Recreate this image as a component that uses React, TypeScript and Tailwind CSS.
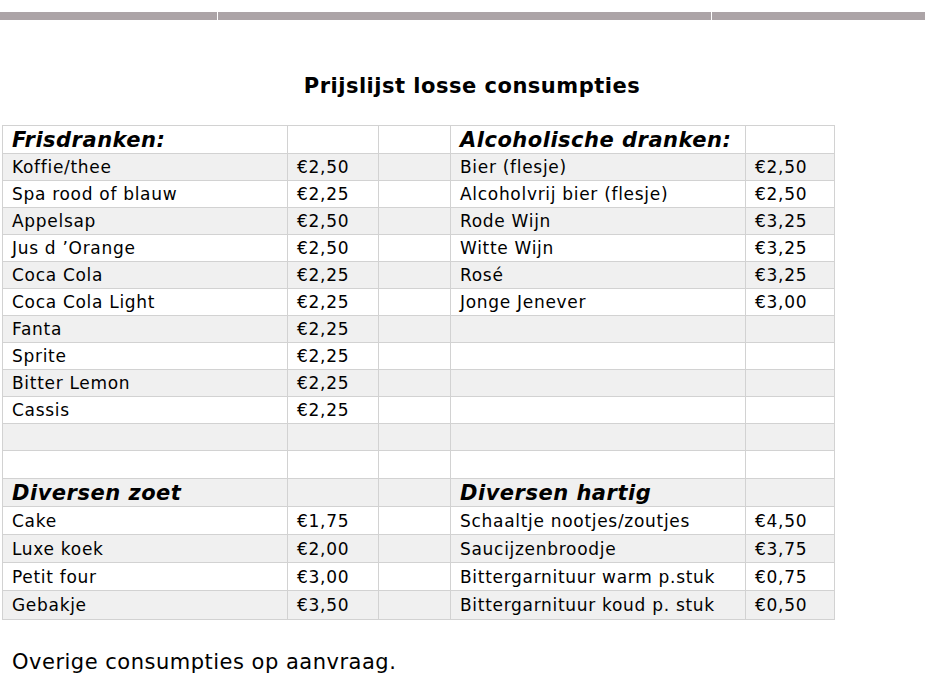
const LEFT_TOP: [string, string][] = [
  ['Koffie/thee', '€2,50'],
  ['Spa rood of blauw', '€2,25'],
  ['Appelsap', '€2,50'],
  ['Jus d ’Orange', '€2,50'],
  ['Coca Cola', '€2,25'],
  ['Coca Cola Light', '€2,25'],
  ['Fanta', '€2,25'],
  ['Sprite', '€2,25'],
  ['Bitter Lemon', '€2,25'],
  ['Cassis', '€2,25'],
  ['', ''],
  ['', ''],
]

const RIGHT_TOP: [string, string][] = [
  ['Bier (flesje)', '€2,50'],
  ['Alcoholvrij bier (flesje)', '€2,50'],
  ['Rode Wijn', '€3,25'],
  ['Witte Wijn', '€3,25'],
  ['Rosé', '€3,25'],
  ['Jonge Jenever', '€3,00'],
  ['', ''],
  ['', ''],
  ['', ''],
  ['', ''],
  ['', ''],
  ['', ''],
]

const LEFT_BOTTOM: [string, string][] = [
  ['Cake', '€1,75'],
  ['Luxe koek', '€2,00'],
  ['Petit four', '€3,00'],
  ['Gebakje', '€3,50'],
]

const RIGHT_BOTTOM: [string, string][] = [
  ['Schaaltje nootjes/zoutjes', '€4,50'],
  ['Saucijzenbroodje', '€3,75'],
  ['Bittergarnituur warm p.stuk', '€0,75'],
  ['Bittergarnituur koud p. stuk', '€0,50'],
]

const td = 'border border-[#d2d2d2] px-[9px] py-0 align-middle whitespace-nowrap leading-5 overflow-hidden'

function Row({ cells, shaded, h, head }: { cells: string[]; shaded: boolean; h: string; head?: boolean }) {
  return (
    <tr className={`${h} ${shaded ? 'bg-[#f0f0f0]' : 'bg-white'}`}>
      {cells.map((c, i) => (
        <td
          key={i}
          className={`${td} ${
            head && (i === 0 || i === 3)
              ? 'text-[21px] font-bold italic tracking-[0.5px]'
              : 'text-[17px] tracking-[0.7px]'
          }`}
        >
          {c}
        </td>
      ))}
    </tr>
  )
}

export default function App() {
  const topRows = LEFT_TOP.map((l, i) => [l[0], l[1], '', RIGHT_TOP[i][0], RIGHT_TOP[i][1]])
  const bottomRows = LEFT_BOTTOM.map((l, i) => [l[0], l[1], '', RIGHT_BOTTOM[i][0], RIGHT_BOTTOM[i][1]])

  return (
    <div className="w-[932px] h-[694px] bg-white text-black font-['DejaVu_Sans',Verdana,sans-serif] pt-3">
      <div className="flex h-2 w-[925px] gap-px">
        <div className="w-[217px] bg-[#aca4a7]" />
        <div className="w-[493px] bg-[#aca4a7]" />
        <div className="flex-1 bg-[#aca4a7]" />
      </div>

      <h1 className="mt-[54px] text-center text-[21px] leading-6 font-bold tracking-[0.5px] pl-[12px]">
        Prijslijst losse consumpties
      </h1>

      <table className="mt-[27px] ml-[2px] border-collapse table-fixed w-[832px]">
        <colgroup>
          <col className="w-[285px]" />
          <col className="w-[91px]" />
          <col className="w-[72px]" />
          <col className="w-[295px]" />
          <col className="w-[89px]" />
        </colgroup>
        <tbody>
          <Row cells={['Frisdranken:', '', '', 'Alcoholische dranken:', '']} shaded={false} h="h-[28px]" head />
          {topRows.map((r, i) => (
            <Row key={i} cells={r} shaded={i % 2 === 0} h={i === 11 ? 'h-[28px]' : 'h-[27px]'} />
          ))}
          <Row cells={['Diversen zoet', '', '', 'Diversen hartig', '']} shaded h="h-[28px]" head />
          {bottomRows.map((r, i) => (
            <Row key={i} cells={r} shaded={i % 2 === 1} h={i === 3 ? 'h-[29px]' : 'h-[28px]'} />
          ))}
        </tbody>
      </table>

      <p className="mt-[30px] pl-[12px] text-[21px] leading-6 tracking-[0.5px]">Overige consumpties op aanvraag.</p>
    </div>
  )
}
